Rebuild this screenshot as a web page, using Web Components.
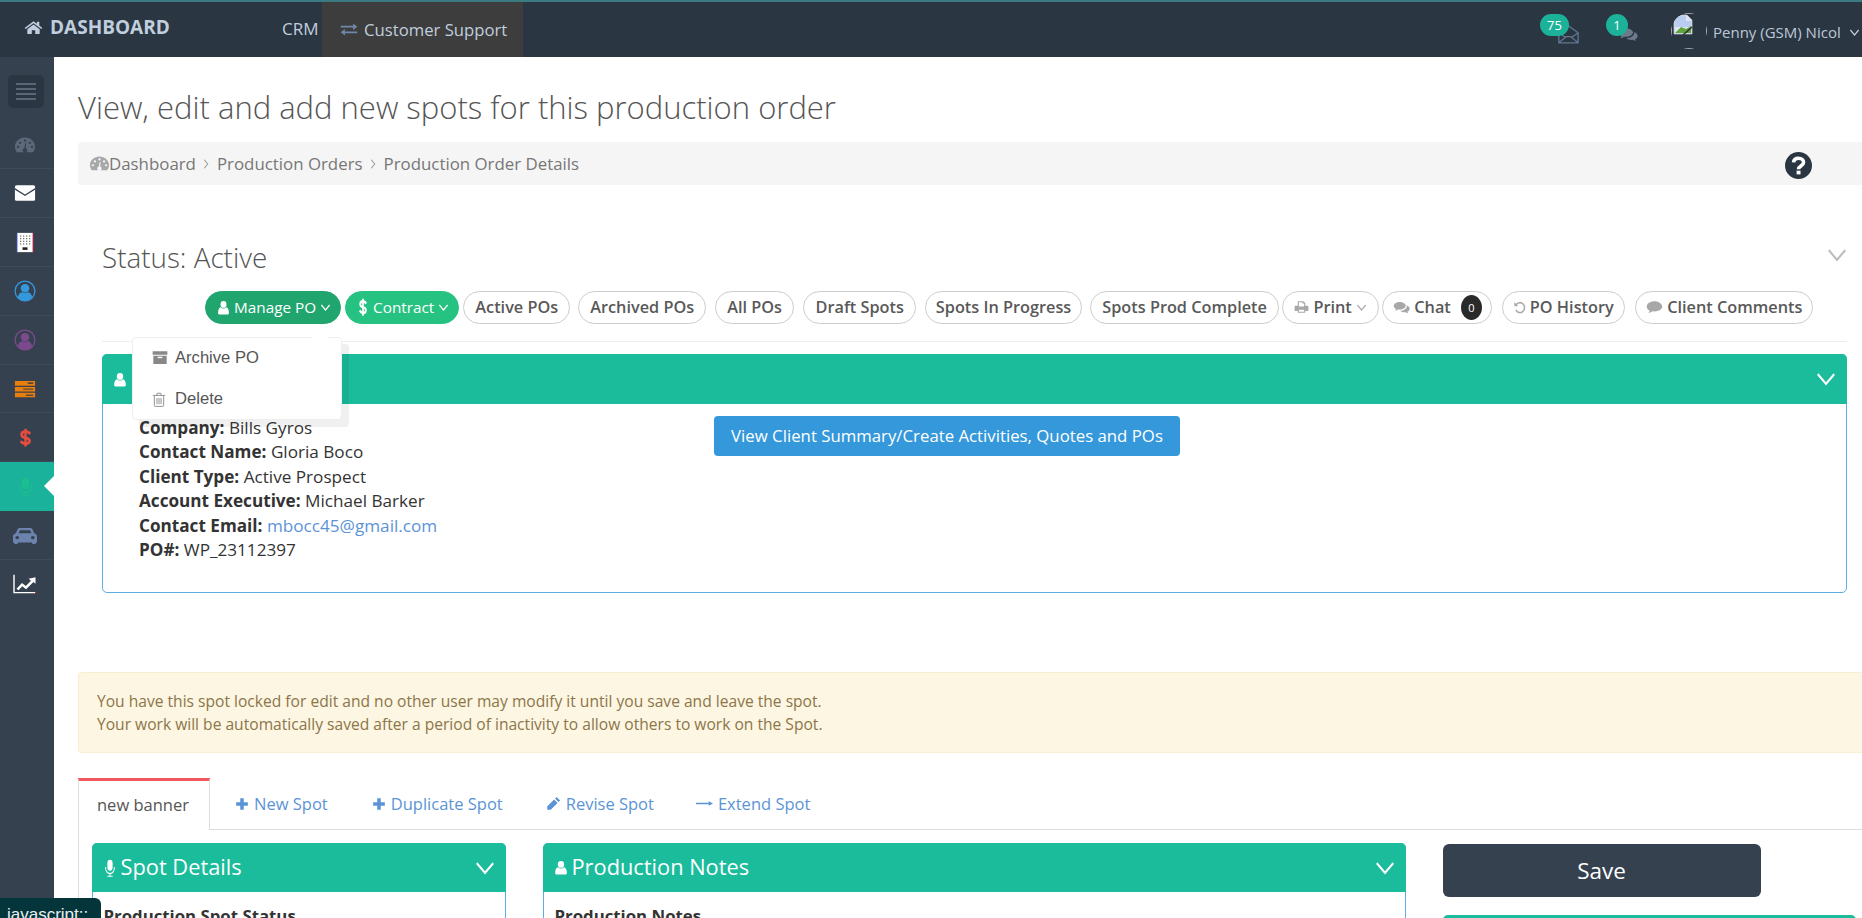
<!DOCTYPE html>
<html lang="en">
<head>
<meta charset="utf-8">
<title>Production Order Details</title>
<style>
  html, body { margin: 0; height: 918px; overflow: hidden; background: #fff; }
  body { font-family: "Open Sans", "Liberation Sans", sans-serif; font-size: 14px; color: #333; display: flex; flex-direction: column; }
  .layout { display: flex; flex: 1; min-height: 0; }
</style>
</head>
<body>
<x-topbar></x-topbar>
<div class="layout">
  <x-sidebar>
    <x-side-item icon="gauge" color="#5c6878"></x-side-item>
    <x-side-item icon="envelope" color="#fff"></x-side-item>
    <x-side-item icon="building" color="#fff"></x-side-item>
    <x-side-item icon="usercircle" color="#3498db"></x-side-item>
    <x-side-item icon="usercircle" color="#7a4a8c"></x-side-item>
    <x-side-item icon="server" color="#e87e0c"></x-side-item>
    <x-side-item icon="dollar" color="#e74c3c"></x-side-item>
    <x-side-item icon="mic" color="#1bbf8f" active></x-side-item>
    <x-side-item icon="car" color="#6b83ad"></x-side-item>
    <x-side-item icon="chart" color="#fff" plain></x-side-item>
  </x-sidebar>
  <x-main>
    <x-page-title>View, edit and add new spots for this production order</x-page-title>
    <x-breadcrumb></x-breadcrumb>
    <x-status-block>
      <x-pill-row>
        <x-pill variant="dark" icon="user" caret>Manage PO</x-pill>
        <x-pill variant="green" icon="dollar" caret style="margin-left:4px">Contract</x-pill>
        <x-pill style="margin-left:4px">Active POs</x-pill>
        <x-pill style="margin-left:8px">Archived POs</x-pill>
        <x-pill style="margin-left:9px">All POs</x-pill>
        <x-pill style="margin-left:9.500px">Draft Spots</x-pill>
        <x-pill style="margin-left:9.500px;padding:0 9.500px 1px">Spots In Progress</x-pill>
        <x-pill style="margin-left:8.500px">Spots Prod Complete</x-pill>
        <x-pill icon="print" caret style="margin-left:3.500px">Print</x-pill>
        <x-pill icon="comments" count="0" style="margin-left:3.500px;padding:0 10px 1px">Chat</x-pill>
        <x-pill icon="history" style="margin-left:10px;padding:0 10px 1px">PO History</x-pill>
        <x-pill icon="comment" style="margin-left:10.500px;padding:0 10px 1px">Client Comments</x-pill>
        <x-menu></x-menu>
      </x-pill-row>
      <x-panel icon="user" style="--hh:50px">
        <x-client-info></x-client-info>
      </x-panel>
    </x-status-block>
    <x-alert>You have this spot locked for edit and no other user may modify it until you save and leave the spot.<br>Your work will be automatically saved after a period of inactivity to allow others to work on the Spot.</x-alert>
    <x-tabs></x-tabs>
    <x-tab-content>
      <x-panel icon="mic" heading="Spot Details"><x-field-label>Production Spot Status</x-field-label></x-panel>
      <x-panel icon="user" heading="Production Notes"><x-field-label>Production Notes</x-field-label></x-panel>
      <x-side-actions></x-side-actions>
    </x-tab-content>
  </x-main>
</div>
<x-status-bubble>javascript::</x-status-bubble>

<script>
const ICONS = {
  home: '<path fill="currentColor" d="M12 3.2 .8 12.6l1.3 1.6L12 5.900l9.900 8.300 1.300-1.600-3.900-3.300V4h-3v2.600z"/><path fill="currentColor" d="M12 7.900 4.200 14.400V21h5.600v-5.200h4.400V21h5.600v-6.600z"/>',
  exchange: '<path fill="currentColor" d="M1 6.800h16.500V3.400L23 8l-5.500 4.600V9.200H1zM23 17.200H6.500v3.400L1 16l5.500-4.600v3.400H23z"/>',
  envelopeOpen: '<path fill="none" stroke="currentColor" stroke-width="1.500" d="M1 10.500 12 2l11 8.500V22.500H1zM1 22.500l8.500-7.500h5l8.500 7.500M1 10.500l8 6M23 10.500l-8 6"/>',
  comments: '<path fill="currentColor" d="M9.500 3C4.800 3 1 5.800 1 9.300c0 2 1.200 3.800 3.200 5-.3 1.100-.8 2-1.600 2.900 1.800-.2 3.400-1 4.700-2.100.7.100 1.400.2 2.200.2 4.700 0 8.500-2.800 8.500-6S14.200 3 9.500 3z"/><path fill="currentColor" d="M19.500 8.500c.1.300.1.600.1.900 0 4.200-4.200 7.500-9.400 7.800 1.300 1.500 3.500 2.400 5.900 2.400.6 0 1.200-.1 1.800-.2 1 .9 2.300 1.500 3.700 1.700-.6-.7-1-1.500-1.200-2.400C22.100 17.700 23.500 16 23.500 14c0-2.200-1.600-4.300-4-5.500z"/>',
  comment: '<path fill="currentColor" d="M12 3.500C5.900 3.500 1 7 1 11.400c0 2.600 1.700 4.900 4.300 6.300-.4 1.200-1.100 2.300-2.100 3.300 2.400-.2 4.500-1.200 6.200-2.500.8.100 1.700.2 2.600.2 6.100 0 11-3.500 11-7.300S18.100 3.500 12 3.500z"/>',
  user: '<circle fill="currentColor" cx="12" cy="7" r="5.500"/><path fill="currentColor" d="M4 23c-1.400 0-2-1-2-2.500C2 15.500 4 12 6.800 11.600 8.200 12.900 10 13.600 12 13.600s3.800-.7 5.200-2c2.800.4 4.800 3.900 4.800 8.900 0 1.500-.6 2.500-2 2.500z"/>',
  usercircle: '<circle cx="12" cy="12" r="10.800" fill="none" stroke="currentColor" stroke-width="1.400"/><circle fill="currentColor" cx="12" cy="9" r="4.700"/><path fill="currentColor" d="M4.200 19c.3-3.500 2.500-5.700 4.800-5.700 1 .6 2 .9 3 .9s2-.3 3-.9c2.300 0 4.500 2.200 4.800 5.700-2 2.200-4.800 3.700-7.800 3.700s-5.800-1.500-7.800-3.700z"/>',
  gauge: '<path fill="currentColor" fill-rule="evenodd" d="M12 2C5.400 2 0 7.400 0 14c0 2.800.8 5.300 2.200 7.500h19.600C23.200 19.300 24 16.800 24 14 24 7.400 18.600 2 12 2zM12 4.700a1.500 1.500 0 1 1 0 3 1.500 1.500 0 0 1 0-3zM6.200 7.500a1.500 1.500 0 1 1 0 3 1.500 1.500 0 0 1 0-3zM17.800 7.500a1.500 1.500 0 1 1 0 3 1.500 1.500 0 0 1 0-3zM3.700 13a1.500 1.500 0 1 1 0 3 1.500 1.500 0 0 1 0-3zM20.300 13a1.500 1.500 0 1 1 0 3 1.500 1.500 0 0 1 0-3zM13.400 9.800l-.6 6.600c1.100.4 1.900 1.500 1.900 2.700 0 1.100-.5 1.900-1.300 2.400h-3c-.8-.5-1.300-1.300-1.300-2.400 0-1.300.9-2.500 2.100-2.800l1-6.500z"/>',
  envelope: '<rect x="1" y="3.500" width="22" height="17" rx="1.800" fill="#fff"/><path d="M1 7.500 12 14.500 23 7.500" fill="none" stroke="#364150" stroke-width="1.300"/>',
  building: '<rect x="4" y="1" width="16" height="22" fill="#fff"/><path d="M4 1v22" stroke="#3a50c8" stroke-width=".9"/><path d="M20 1v22" stroke="#d14" stroke-width=".9"/><g fill="#666"><rect x="7" y="4" width="1.300" height="1.300"/><rect x="10" y="4" width="1.300" height="1.300"/><rect x="13" y="4" width="1.300" height="1.300"/><rect x="16" y="4" width="1.300" height="1.300"/><rect x="7" y="7" width="1.300" height="1.300"/><rect x="10" y="7" width="1.300" height="1.300"/><rect x="13" y="7" width="1.300" height="1.300"/><rect x="16" y="7" width="1.300" height="1.300"/><rect x="7" y="10" width="1.300" height="1.300"/><rect x="10" y="10" width="1.300" height="1.300"/><rect x="13" y="10" width="1.300" height="1.300"/><rect x="16" y="10" width="1.300" height="1.300"/><rect x="7" y="13" width="1.300" height="1.300"/><rect x="10" y="13" width="1.300" height="1.300"/><rect x="13" y="13" width="1.300" height="1.300"/><rect x="16" y="13" width="1.300" height="1.300"/></g><rect x="9.500" y="17.500" width="5" height="3" fill="#222"/>',
  server: '<path fill="currentColor" d="M1 2.500h22v5.500H1zM1 9.500h22v5.500H1zM1 16.500h22V22H1z"/><path fill="#5a4a3a" d="M15 4h6v2h-6zM10 11.500h11v1.500H10zM13 18.500h8v1.800h-8z"/>',
  dollar: '<path fill="none" stroke="currentColor" stroke-width="3.600" d="M18.500 7.500C17 5.500 14.800 4.600 12 4.600 8.700 4.600 6.400 6.200 6.400 8.400c0 5.400 11.400 2.500 11.400 7.800 0 2.300-2.500 3.500-5.800 3.500-3.200 0-5.200-1.100-6.500-3.200"/><path fill="none" stroke="currentColor" stroke-width="3.400" d="M12 1v22.500"/>',
  mic: '<rect x="7.500" y="1" width="9" height="14.500" rx="4.500" fill="currentColor"/><path fill="none" stroke="currentColor" stroke-width="1.600" d="M4.500 10.500v1.500a7.500 7.500 0 0 0 15 0v-1.500M12 19.500v2.700M7.500 23h9"/>',
  car: '<path fill="currentColor" fill-rule="evenodd" d="M6.800 3.500h10.400c1 0 1.800.5 2.100 1.400l1.900 5.100C22.800 10.500 24 12 24 13.800V21h-1v1c0 .6-.9 1-2 1s-2-.4-2-1v-1H5v1c0 .6-.9 1-2 1s-2-.4-2-1v-1H0v-7.200C0 12 1.200 10.500 2.800 10l1.900-5.100c.3-.9 1.100-1.400 2.100-1.400zM7 6.200 5.500 10h13L17 6.200zM4.200 13.200a1.900 1.900 0 1 0 0 3.800 1.900 1.900 0 0 0 0-3.800zM19.800 13.200a1.900 1.900 0 1 0 0 3.800 1.900 1.900 0 0 0 0-3.800z"/>',
  chart: '<path fill="none" stroke="#fff" stroke-width="1.400" d="M1 2v19.500h21"/><path d="M22 20.800h1.200v1.400H22z" fill="#e23"/><path fill="#fff" d="M3.500 17.200 9 11l3.800 3.200L18 8.500l-2.400-2.300L22.500 4.500V11.800l-2-2.100-7.500 8-3.800-3.300-3.700 4.300z"/>',
  print: '<path fill="currentColor" fill-rule="evenodd" d="M6 2h9l3 3v5h3.500c.8 0 1.500.7 1.500 1.500V19h-5v3H6v-3H1v-7.500C1 10.700 1.700 10 2.500 10H6zM7.800 3.800V11h8.400V6h-2.500V3.800zM7.800 16.500v3.700h8.400v-3.700z"/>',
  history: '<path fill="none" stroke="currentColor" stroke-width="2.700" d="M5.800 8.200A8.500 8.500 0 1 1 5.300 17"/><path fill="currentColor" d="M2.500 3.500 9.500 10.500H2.500z"/>',
  archive: '<path fill="currentColor" d="M1 2h22v5.500H1zM2 9h20v13.500H2z"/><rect x="8.500" y="10.800" width="7" height="2.200" fill="#fff"/>',
  trash: '<path fill="none" stroke="currentColor" stroke-width="1.500" d="M4 6.500V21.500c0 1 .6 1.500 1.500 1.500h13c.9 0 1.500-.5 1.500-1.500V6.500M1.500 5.500h21M8 5.500l1-3.500h6l1 3.500M8.500 9.500v10M12 9.500v10M15.500 9.500v10"/>',
  plus: '<path fill="currentColor" d="M9 2h6v7h7v6h-7v7H9v-7H2V9h7z"/>',
  pencil: '<path fill="currentColor" d="M17 1.500 22.500 7 20 9.500 14.500 4zM13 5.500 18.500 11 7.500 22H2v-5.500z"/>',
  arrow: '<path fill="currentColor" d="M0 10.500h18V7l6 5-6 5v-3.500H0z"/>',
  help: '<circle cx="12" cy="12" r="12" fill="currentColor"/><path fill="none" stroke="#fff" stroke-width="3.200" d="M7.600 9.300C7.800 6.800 9.700 5.500 12 5.500c2.600 0 4.500 1.500 4.500 3.700 0 3.300-4.500 3.100-4.500 6.100"/><rect x="10.300" y="16.600" width="3.500" height="3.300" fill="#fff"/>',
  chev: '<path fill="none" stroke="currentColor" stroke-width="2.600" d="M3 7.500l9 9 9-9"/>',
  chevThin: '<path fill="none" stroke="currentColor" stroke-width="2" d="M3 7.500l9 9 9-9"/>',
  sep: '<path fill="none" stroke="currentColor" stroke-width="3" d="M5 2l14 10L5 22"/>'
};

function svg(name, w, h) {
  return `<svg xmlns="http://www.w3.org/2000/svg" viewBox="0 0 24 24" width="${w}" height="${h || w}" style="display:block;flex:none" preserveAspectRatio="none" aria-hidden="true">${ICONS[name]}</svg>`;
}

function comp(tag, html, setup) {
  customElements.define(tag, class extends HTMLElement {
    constructor() { super(); this.attachShadow({ mode: 'open' }); }
    connectedCallback() {
      this.shadowRoot.innerHTML = typeof html === 'function' ? html(this) : html;
      if (setup) setup(this);
    }
  });
}

comp('x-topbar', `
<style>
  :host { display: flex; align-items: stretch; height: 55px; flex: none; background: #2b3643; border-top: 2px solid #3a7a80; color: #c0cede; font-size: 17px; position: relative; z-index: 3; }
  .brand { display: flex; align-items: center; gap: 7px; width: 258px; padding-left: 24px; font-weight: 700; font-size: 19px; margin-top: -5px; }
  .crm { display: flex; align-items: center; width: 40px; margin-top: -3px; }
  .tab { display: flex; align-items: center; gap: 6px; width: 201px; box-sizing: border-box; padding-left: 18px; background: #3d3d3d; font-size: 16.700px; }
  .tab span { margin-top: -1px; }
  .tab svg { color: #6e89a8; }
  .badge { position: absolute; top: 12px; height: 22px; border-radius: 11px; background: #1cb29a; color: #fff; font-size: 13px; display: flex; align-items: center; justify-content: center; }
  .mail { position: absolute; left: 1558px; top: 22px; color: #5f7590; }
  .chat { position: absolute; left: 1618px; top: 24px; color: #6d7a8c; }
  .ava { position: absolute; left: 1671px; top: 11px; }
  .name { position: absolute; left: 1713px; top: 18px; font-size: 15px; white-space: nowrap; line-height: 24px; color: #bcc8d8; }
  .caret { position: absolute; left: 1849px; top: 24px; color: #c8d2de; }
</style>
<div class="brand">${svg('home', 19, 17)}<span>DASHBOARD</span></div>
<div class="crm">CRM</div>
<div class="tab">${svg('exchange', 18, 17)}<span>Customer Support</span></div>
<div class="mail">${svg('envelopeOpen', 21, 20)}</div>
<div class="badge" style="left:1540px;width:29px">75</div>
<div class="chat">${svg('comments', 20, 17)}</div>
<div class="badge" style="left:1606px;width:22px">1</div>
<div class="ava">
  <svg xmlns="http://www.w3.org/2000/svg" width="36" height="36" viewBox="0 0 36 36" style="display:block" aria-hidden="true">
    <defs><clipPath id="c"><circle cx="18" cy="18" r="17.800"/></clipPath></defs>
    <g clip-path="url(#c)">
      <rect x=".5" y=".5" width="35" height="35" fill="none" stroke="#c8c8c8"/>
      <path d="M3 2h13l5 5v14H3z" fill="#dfe6f2" stroke="#b8bcc4" stroke-width=".8"/>
      <path d="M4 3h11v5h5v6H4z" fill="#b9cdf0"/>
      <path d="M4 20l6-6 5 2 5-3v7z" fill="#5fa63c"/>
      <path d="M12 22l9-8" stroke="#333" stroke-width="1.600"/>
    </g>
  </svg>
</div>
<div class="name">Penny (GSM) Nicol</div>
<div class="caret">${svg('chev', 11, 13)}</div>
`);

comp('x-sidebar', `
<style>
  :host { display: flex; flex-direction: column; width: 54px; flex: none; background: #364150; }
  .toggle { width: 36px; height: 33px; margin: 18px 0 12.700px 8px; background: #2b3643; border-radius: 5px; display: flex; flex-direction: column; justify-content: center; align-items: center; gap: 3.500px; }
  .toggle i { display: block; width: 20px; height: 1.500px; background: #5a6676; }
</style>
<div class="toggle"><i></i><i></i><i></i><i></i></div>
<slot></slot>
`);

comp('x-side-item', (el) => {
  const icon = el.getAttribute('icon');
  const sizes = { gauge:[20,18], envelope:[22,22], building:[24,21], usercircle:[22,22], server:[22,20], dollar:[17,19], mic:[19,19], car:[24,20], chart:[24,22] };
  const [w, h] = sizes[icon];
  return `<style>
    :host { display: flex; align-items: center; height: 48.800px; box-sizing: border-box; border-bottom: 1px solid #3f4b5b; padding-left: 14px; position: relative; }
    :host([active]) { background: #1ab29a; border-bottom-color: #1ab29a; }
    :host([plain]) { border-bottom: 0; }
    .ic { width: 22px; display: flex; justify-content: center; color: ${el.getAttribute('color')}; }
    .tri { position: absolute; right: 0; top: 14px; width: 0; height: 0; border-style: solid; border-width: 10px 10px 10px 0; border-color: transparent #fff transparent transparent; }
  </style><div class="ic">${svg(icon, w, h)}</div>${el.hasAttribute('active') ? '<div class="tri"></div>' : ''}`;
});

comp('x-main', `
<style>:host { display: flex; flex-direction: column; flex: 1; min-width: 0; padding-left: 24px; overflow: hidden; }</style>
<slot></slot>`);

comp('x-page-title', `
<style>
  :host { display: flex; align-items: center; height: 85px; padding-top: 14px; box-sizing: border-box; flex: none; font-size: 31px; font-weight: 300; color: #555; white-space: nowrap; }
</style><slot></slot>`);

comp('x-breadcrumb', `
<style>
  :host { display: flex; align-items: center; height: 43px; flex: none; background: #f5f5f5; border-radius: 4px 0 0 4px; padding-left: 12px; color: #777; font-size: 16.850px; position: relative; }
  .g { color: #a8a8a8; }
  .s { margin: 0 7.500px; color: #999; }
  .help { position: absolute; left: 1707px; top: 10px; color: #2b3643; }
</style>
<span class="g">${svg('gauge', 19, 17)}</span><span>Dashboard</span>
<span class="s">${svg('sep', 6, 10)}</span><span>Production Orders</span>
<span class="s">${svg('sep', 6, 10)}</span><span>Production Order Details</span>
<span class="help">${svg('help', 27, 27)}</span>
`);

comp('x-status-block', `
<style>
  :host { display: block; flex: none; margin: 52px 15px 0 24px; }
  .st { display: flex; align-items: center; justify-content: space-between; height: 42px; font-size: 27.800px; font-weight: 300; color: #555; }
  .st span { padding-bottom: 2px; }
  .st svg { color: #bbb; margin: -6px -1px 0 0; }
  .hr { height: 1px; background: #eee; margin: 17px 0 12px; }
</style>
<div class="st"><span>Status: Active</span>${svg('chevThin', 22, 26)}</div>
<slot name="x"></slot>
<slot></slot>
`, (el) => {
  const row = el.querySelector('x-pill-row');
  const hr = document.createElement('div');
  hr.className = 'hr';
  const slots = el.shadowRoot.querySelectorAll('slot');
  slots[1].before(hr);
  row.slot = 'x';
});

comp('x-pill-row', `
<style>
  :host { display: flex; align-items: center; padding-left: 103px; margin-top: 12px; height: 33px; position: relative; z-index: 2; }
</style><slot></slot>`);

comp('x-pill', (el) => {
  const ic = el.getAttribute('icon');
  const count = el.getAttribute('count');
  const sz = { user:[13,15], dollar:[12,18], print:[15,14], comments:[17,15], history:[13,14], comment:[17,16] };
  return `<style>
    :host { display: inline-flex; align-items: center; gap: 4px; flex: none; height: 33px; box-sizing: border-box; padding: 0 11px 1px; border: 1px solid #ccc; border-radius: 17px; font-size: 16.300px; font-weight: 600; color: #595959; background: #fff; white-space: nowrap; }
    :host([variant="dark"]) { background: #21a56f; border-color: #21a56f; color: #fff; font-weight: 400; font-size: 15.300px; padding-right: 9px; }
    :host([variant="green"]) { background: #26c281; border-color: #26c281; color: #fff; font-weight: 400; font-size: 15.300px; padding-right: 9px; }
    .ic, .caret { color: #a8a8a8; }
    :host([variant]) .ic, :host([variant]) .caret { color: #fff; }
    .n { display: inline-flex; align-items: center; justify-content: center; width: 21px; height: 25px; margin: 1px -1px 0 6px; border-radius: 50%; background: #2a2a2a; color: #fff; font-size: 11px; font-weight: 400; }
  </style>${ic ? `<span class="ic">${svg(ic, sz[ic][0], sz[ic][1])}</span>` : ''}<slot></slot>${count !== null ? `<span class="n">${count}</span>` : ''}${el.hasAttribute('caret') ? `<span class="caret">${svg('chev', 11, 13)}</span>` : ''}`;
});

comp('x-menu', `
<style>
  :host { position: absolute; left: 30px; top: 46px; width: 210px; height: 83px; box-sizing: border-box; background: #fff; border: 1px solid #eee; border-radius: 4px; box-shadow: 7px 7px 0 rgba(0,0,0,.06); font-family: "Liberation Sans", Arial, sans-serif; font-size: 16.600px; font-weight: 400; color: #555; display: flex; flex-direction: column; z-index: 5; }
  .a { position: absolute; right: 12px; top: -9px; width: 0; height: 0; border-left: 9px solid transparent; border-right: 9px solid transparent; border-bottom: 9px solid #fff; }
  .it { display: flex; align-items: center; height: 40px; padding-left: 19px; gap: 7px; }
  .it + .it { padding-top: 2px; }
  .it svg { color: #888; }
</style>
<div class="a"></div>
<div class="it">${svg('archive', 16, 15)}<span>Archive PO</span></div>
<div class="it">${svg('trash', 14, 15)}<span style="margin-left:2px">Delete</span></div>
`);

comp('x-panel', (el) => {
  const h = el.getAttribute('heading');
  const ic = el.getAttribute('icon');
  return `<style>
    :host { display: block; box-sizing: border-box; border: 1px solid #5dade2; border-radius: 5px; background: #fff; min-width: 0; }
    .h { display: flex; align-items: center; height: var(--hh, 49px); box-sizing: border-box; background: #1abc9c; color: #fff; margin: -1px -1px 0; border-radius: 5px 5px 0 0; padding: 0 10px 0 11px; font-size: 21.800px; gap: 4px; position: relative; }
    .h .t { margin-top: -2px; }
    .h .c { margin-left: auto; }
  </style>
  <div class="h">${svg(ic, ic === 'mic' ? 14 : 14, ic === 'mic' ? 18 : 15)}${h ? `<span class="t">${h}</span>` : ''}<span class="c">${svg('chevThin', 22, 26)}</span></div>
  <slot></slot>`;
});

comp('x-client-info', `
<style>
  :host { display: grid; grid-template-columns: 611px auto; height: 188px; box-sizing: border-box; padding-top: 12px; }
  .info { padding-left: 36px; font-size: 17.150px; line-height: 24.400px; color: #333; }
  b { font-weight: 700; }
  a { color: #5b94d6; text-decoration: none; }
  .btn { justify-self: start; display: flex; align-items: center; justify-content: center; width: 466px; height: 40px; padding-bottom: 1px; box-sizing: border-box; background: #3498db; border-radius: 4px; color: #fff; font-size: 16.800px; white-space: nowrap; }
</style>
<div class="info">
  <div><b>Company:</b> Bills Gyros</div>
  <div><b>Contact Name:</b> Gloria Boco</div>
  <div><b>Client Type:</b> Active Prospect</div>
  <div><b>Account Executive:</b> Michael Barker</div>
  <div><b>Contact Email:</b> <a href="#">mbocc45@gmail.com</a></div>
  <div><b>PO#:</b> WP_23112397</div>
</div>
<div class="btn">View Client Summary/Create Activities, Quotes and POs</div>
`);

comp('x-alert', `
<style>
  :host { display: flex; align-items: center; flex: none; height: 81px; box-sizing: border-box; margin-top: 79px; padding-left: 18px; background: #fdf6e3; border: 1px solid #f9eed3; border-right: 0; border-radius: 4px 0 0 4px; color: #8c7548; font-size: 15.600px; line-height: 22.400px; }
</style><div><slot></slot></div>`);

comp('x-tabs', `
<style>
  :host { display: flex; align-items: stretch; flex: none; height: 52px; margin-top: 25px; box-sizing: border-box; border-bottom: 1px solid #ddd; font-size: 16.500px; color: #5b94d6; }
  .on { width: 132px; height: 52px; box-sizing: border-box; display: flex; align-items: center; padding: 0 0 2px 18px; border: 1px solid #ddd; border-top: 3px solid #f3565d; border-bottom: 0; background: #fff; color: #555; }
  .t { display: flex; align-items: center; gap: 5px; }
</style>
<div class="on">new banner</div>
<div class="t" style="margin-left:25px">${svg('plus', 14, 14)}<span>New Spot</span></div>
<div class="t" style="margin-left:44px">${svg('plus', 14, 14)}<span>Duplicate Spot</span></div>
<div class="t" style="margin-left:43px">${svg('pencil', 15, 15)}<span>Revise Spot</span></div>
<div class="t" style="margin-left:42px">${svg('arrow', 17, 11)}<span>Extend Spot</span></div>
`);

comp('x-tab-content', `
<style>
  :host { display: grid; grid-template-columns: 414px 863px 413px; column-gap: 37px; align-items: start; flex: 1; box-sizing: border-box; border-left: 1px solid #ddd; padding: 13px 0 0 12.500px; min-height: 0; }
</style><slot></slot>`);

comp('x-field-label', `
<style>
  :host { display: block; padding: 13px 0 0 11px; font-size: 16.800px; font-weight: 700; color: #333; line-height: 22px; }
</style><slot></slot>`);

comp('x-side-actions', `
<style>
  :host { display: block; padding-top: 1px; }
  .save { display: flex; align-items: center; justify-content: center; width: 318px; height: 53px; background: #364150; border-radius: 6px; color: #fff; font-size: 22.500px; }
  .g { height: 40px; margin-top: 18px; background: #1abc9c; border-radius: 5px 5px 0 0; }
</style>
<div class="save">Save</div><div class="g"></div>
`);

comp('x-status-bubble', `
<style>
  :host { position: fixed; left: 0; top: 898px; width: 101px; height: 20px; overflow: hidden; box-sizing: border-box; padding: 8px 0 0 7px; background: #04353b; border-radius: 0 6px 0 0; color: #e8f0f0; font-family: "Liberation Sans", Arial, sans-serif; font-size: 17px; line-height: 18px; z-index: 9; white-space: nowrap; }
</style><slot></slot>`);
</script>
</body>
</html>
